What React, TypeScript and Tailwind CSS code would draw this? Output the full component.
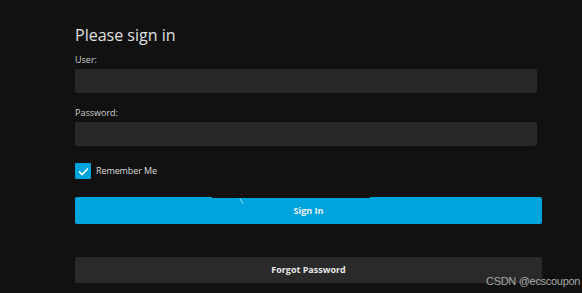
export default function App() {
  return (
    <div className="relative w-[582px] h-[293px] overflow-hidden bg-[#111111] font-['Open_Sans',sans-serif] text-[#dddddd]">
      <div className="w-[467px] ml-[75px] pt-[23px] flex flex-col">
        <h1 className="text-[16px] leading-[24px] text-[#e0e0e0]">Please sign in</h1>

        {/* User */}
        <label className="mt-[7px] text-[9px] leading-[12px] text-[#cfcfcf]">User:</label>
        <div className="mt-[3px] w-[462px] h-[24px] rounded-[2px] bg-[#282828]" />

        {/* Password */}
        <label className="mt-[14px] text-[9px] leading-[12px] text-[#cfcfcf]">Password:</label>
        <div className="mt-[3px] w-[462px] h-[24px] rounded-[2px] bg-[#282828]" />

        {/* Remember me */}
        <div className="mt-[17px] flex items-center gap-[5px]">
          <div className="w-[16px] h-[16px] rounded-[1px] bg-[#00a4dc] flex items-center justify-center">
            <svg width="11" height="9" viewBox="0 0 11 9" fill="none">
              <path d="M1 4.5L4 7.5L10 1.5" stroke="white" strokeWidth="1.6" />
            </svg>
          </div>
          <span className="text-[9px] leading-[12px] tracking-[-0.1px] text-[#dcdcdc]">Remember Me</span>
        </div>

        {/* Sign in */}
        <div className="relative mt-[18px] h-[27px] rounded-[2px] bg-[#00a4dc] flex items-center justify-center">
          <div className="absolute left-[137px] top-0 w-[158px] h-[1px] bg-[#111111]" />
          <div className="absolute left-[166px] top-[1px] w-[1px] h-[6px] bg-[#9fd9ef] rotate-[-35deg]" />
          <span className="text-[9px] font-bold text-[#f0f0f0]">Sign In</span>
        </div>

        {/* Forgot password */}
        <div className="mt-[33px] h-[26px] rounded-[2px] bg-[#2a2a2a] flex items-center justify-center">
          <span className="text-[9px] font-bold text-[#e8e8e8]">Forgot Password</span>
        </div>
      </div>

      <span className="absolute left-[486px] top-[274px] whitespace-nowrap text-[11px] leading-[14px] tracking-[-0.3px] text-[#a8a8a8] font-['Liberation_Sans',sans-serif]">
        CSDN @ecscoupon
      </span>
    </div>
  );
}
